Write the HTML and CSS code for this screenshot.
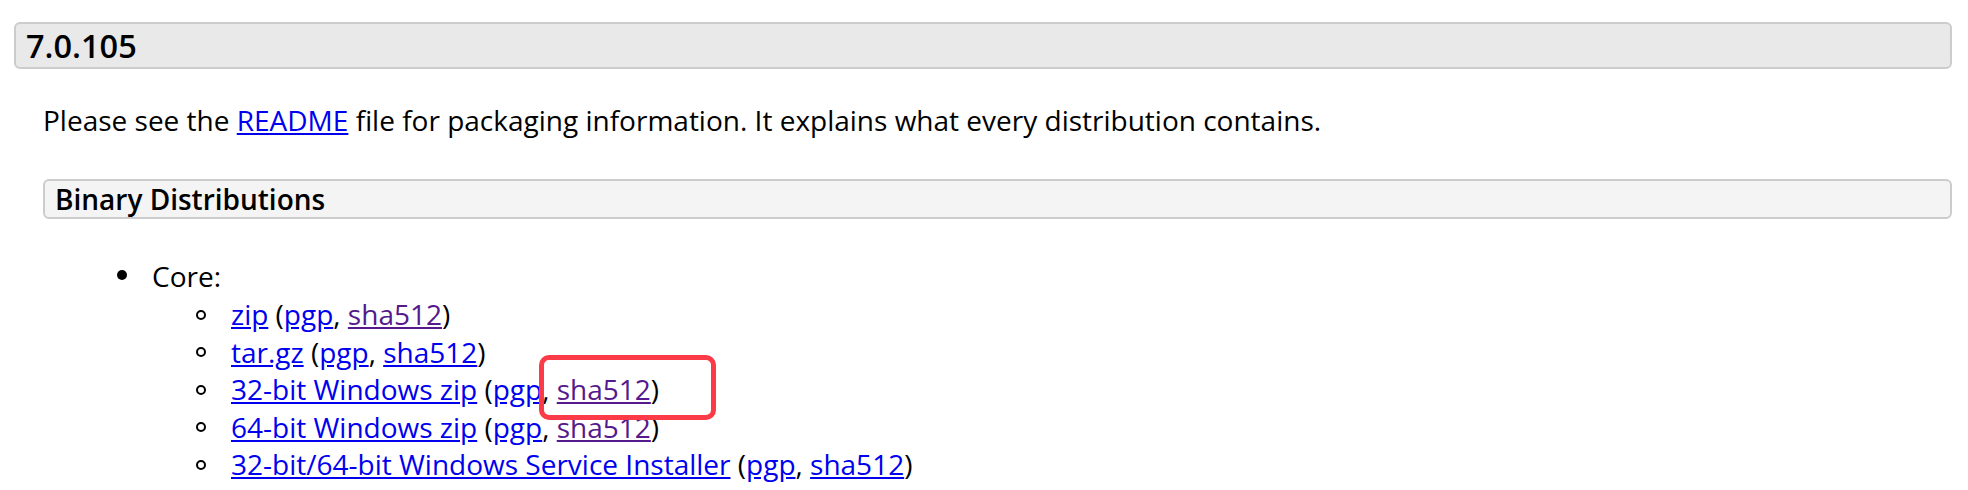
FILE: index.html
```html
<!DOCTYPE html>
<html>
<head>
<meta charset="utf-8">
<title>7.0.105</title>
<link rel="stylesheet" href="styles.css">
</head>
<body>
<h3 class="release-head">7.0.105</h3>
<div class="release-body">
  <p class="intro">Please see the <a href="#readme">README</a> file for packaging information. It explains what every distribution contains.</p>
  <h4 class="sub-head">Binary Distributions</h4>
  <ul class="dist-list">
    <li class="dist-item">Core:
      <ul class="file-list">
        <li class="file-item"><a href="#zip">zip</a> (<a href="#p1">pgp</a>, <a class="visited" href="#s1">sha512</a>)</li>
        <li class="file-item"><a href="#tgz">tar.gz</a> (<a href="#p2">pgp</a>, <a href="#s2">sha512</a>)</li>
        <li class="file-item"><a href="#w32">32-bit Windows zip</a> (<a href="#p3">pgp</a>, <span class="highlight"><a class="visited" href="#s3">sha512</a></span>)</li>
        <li class="file-item"><a href="#w64">64-bit Windows zip</a> (<a href="#p4">pgp</a>, <a class="visited" href="#s4">sha512</a>)</li>
        <li class="file-item"><a href="#svc">32-bit/64-bit Windows Service Installer</a> (<a href="#p5">pgp</a>, <a href="#s5">sha512</a>)</li>
      </ul>
    </li>
  </ul>
</div>
</body>
</html>
```

FILE: styles.css
```css
html, body {
  margin: 0;
  padding: 0;
  background: #ffffff;
}

body {
  font-family: "Open Sans", "DejaVu Sans", sans-serif;
  font-size: 28px;
  line-height: 37.5px;
  color: #000000;
}

a {
  color: #0000ee;
  text-decoration: underline;
}

a.visited {
  color: #551a8b;
}

.release-head {
  margin: 22px 16px 0 14px;
  padding: 0 10px;
  border: 2px solid #cccccc;
  border-radius: 6px;
  background: #e9e9e9;
  font-size: 32.5px;
  font-weight: 600;
  line-height: 43px;
}

.release-body {
  margin: 0 16px 0 43px;
}

.intro {
  margin: 33px 0 0;
}

.sub-head {
  margin: 39.4px 0 0;
  padding: 0 10px;
  border: 2px solid #cccccc;
  border-radius: 6px;
  background: #f4f4f4;
  font-size: 28px;
  font-weight: 600;
  line-height: 36px;
}

.dist-list {
  margin: 38.7px 0 0 29px;
  padding: 0 0 0 80px;
  list-style: none;
}

.dist-item::before {
  content: "";
  display: inline-block;
  width: 10px;
  height: 10px;
  margin: 0 25px 0 -35px;
  border-radius: 50%;
  background: #000000;
  vertical-align: 6.3px;
}

.file-list {
  margin: 1.2px 0 0;
  padding: 0 0 0 79px;
  list-style: none;
}

.file-item::before {
  content: "";
  display: inline-block;
  box-sizing: border-box;
  width: 10px;
  height: 10px;
  margin: 0 24.7px 0 -34.7px;
  border: 2px solid #000000;
  border-radius: 50%;
  vertical-align: 5.5px;
}

.highlight {
  position: relative;
}

.highlight::after {
  content: "";
  position: absolute;
  left: -18px;
  right: -65px;
  top: -15px;
  bottom: -12px;
  border: 5px solid #fc3b48;
  border-radius: 10px;
  pointer-events: none;
}
```
